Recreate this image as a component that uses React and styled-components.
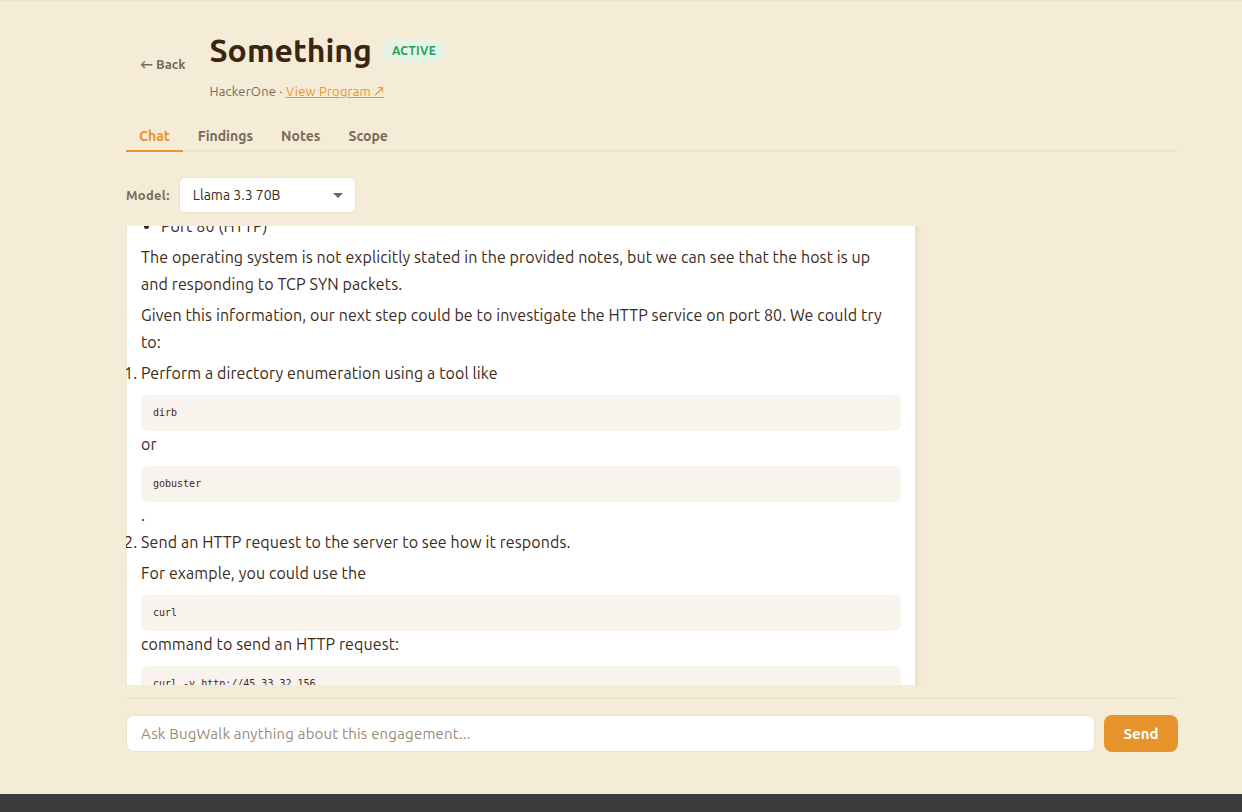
import React, { useLayoutEffect, useRef } from "react";
import styled, { createGlobalStyle } from "styled-components";

const GlobalStyle = createGlobalStyle`
  html, body {
    margin: 0;
    padding: 0;
    background: #f5ecd8;
    font-family: "Ubuntu", "Lato", "Noto Sans", sans-serif;
    color: #3d2a1a;
  }
  * { box-sizing: border-box; }
`;

const Page = styled.div`
  height: 812px;
  display: flex;
  flex-direction: column;
  border-top: 1px solid #efe3c9;
`;

const Main = styled.main`
  flex: 1;
  display: flex;
  flex-direction: column;
  padding: 29px 64px 0 126px;
  min-height: 0;
`;

const Footer = styled.div`
  height: 18px;
  background: #3a3b3d;
`;

const Header = styled.header`
  display: flex;
  align-items: center;
  gap: 10px;
`;

const BackButton = styled.button`
  background: transparent;
  border: none;
  padding: 8px 14px 10px;
  font-family: inherit;
  font-size: 13px;
  font-weight: 700;
  color: #7a6a58;
  cursor: pointer;
`;

const TitleBlock = styled.div`
  display: flex;
  flex-direction: column;
`;

const TitleRow = styled.div`
  display: flex;
  align-items: center;
  gap: 10px;
`;

const Title = styled.h1`
  margin: 0;
  font-size: 32px;
  line-height: 40px;
  font-weight: 700;
  color: #3b2410;
`;

const Badge = styled.span`
  background: #e6f4e8;
  color: #27a05a;
  font-size: 12px;
  font-weight: 700;
  letter-spacing: 0.3px;
  padding: 5px 10px;
  border-radius: 12px;
`;

const Subtitle = styled.div`
  margin-top: 13px;
  font-size: 13px;
  color: #7a6a58;
  letter-spacing: 0.2px;
`;

const ProgramLink = styled.a`
  color: #e8942c;
  text-decoration: underline;
`;

const Tabs = styled.nav`
  display: flex;
  gap: 2px;
  margin-top: 22px;
  border-bottom: 2px solid #ede2cd;
`;

const Tab = styled.button`
  background: transparent;
  border: none;
  font-family: inherit;
  font-size: 14px;
  font-weight: 700;
  padding: 7px 13px 6px;
  margin-bottom: -2px;
  color: ${({ $active }) => ($active ? "#e8942c" : "#7a6a58")};
  border-bottom: 2px solid ${({ $active }) => ($active ? "#e8942c" : "transparent")};
  cursor: pointer;
`;

const ModelRow = styled.div`
  display: flex;
  align-items: center;
  gap: 9px;
  margin-top: 25px;
`;

const ModelLabel = styled.label`
  font-size: 13px;
  font-weight: 700;
  color: #7a6a58;
  letter-spacing: 0.3px;
`;

const Select = styled.div`
  width: 177px;
  height: 36px;
  background: #fff;
  border: 1px solid #ede2cd;
  border-radius: 6px;
  display: flex;
  align-items: center;
  justify-content: space-between;
  padding: 0 12px 0 13px;
  font-size: 14px;
  color: #3d2a1a;
`;

const Caret = styled.span`
  width: 0;
  height: 0;
  border-left: 5px solid transparent;
  border-right: 5px solid transparent;
  border-top: 5px solid #6f6458;
`;

const ChatScroll = styled.div`
  margin-top: 13px;
  height: 459px;
  overflow: hidden;
`;

const Bubble = styled.div`
  width: 789px;
  background: #fff;
  border-left: 1px solid #efe6d6;
  padding: 10px 14px 20px 14px;
  box-shadow: 3px 0 4px rgba(160, 130, 80, 0.12);
  font-size: 16px;
  line-height: 27px;
  letter-spacing: 0.1px;
  color: #3d2a1a;
  margin-bottom: 12px;
`;

const UserBubble = styled(Bubble)`
  margin-left: auto;
  width: 520px;
  background: #e8942c;
  color: #fff;
  box-shadow: none;
  border: none;
  border-radius: 10px;
`;

const P = styled.p`
  margin: 4px 0;
  padding-right: 10px;
`;

const BulletList = styled.ul`
  margin: 4px 0;
  padding-left: 20px;
`;

const NumberList = styled.ol`
  margin: 3px 0 0;
  padding-left: 0;
`;

const Item = styled.li``;

const Code = styled.pre`
  margin: 8px 0 0;
  background: #f8f3ec;
  border-radius: 6px;
  padding: 12px;
  font-family: "DejaVu Sans Mono", "Liberation Mono", monospace;
  font-size: 10px;
  line-height: 12px;
  letter-spacing: 0;
  color: #3d2a1a;
  white-space: pre-wrap;
`;

const Composer = styled.form`
  margin-top: 12px;
  border-top: 2px solid #ede2cd;
  padding-top: 16px;
  display: flex;
  gap: 9px;
`;

const Input = styled.input`
  flex: 1;
  height: 37px;
  border: 1px solid #ece2d0;
  border-radius: 8px;
  background: #fff;
  padding: 0 14px;
  font-family: inherit;
  font-size: 15px;
  letter-spacing: 0.2px;
  color: #3d2a1a;
  outline: none;
  &::placeholder {
    color: #9a8a78;
  }
`;

const SendButton = styled.button`
  width: 74px;
  height: 37px;
  border: none;
  border-radius: 8px;
  background: #e8942c;
  color: #fff;
  font-family: inherit;
  font-size: 15px;
  font-weight: 700;
  cursor: pointer;
`;

const tabs = ["Chat", "Findings", "Notes", "Scope"];

export default function App() {
  const scrollRef = useRef(null);
  const anchorRef = useRef(null);

  useLayoutEffect(() => {
    const box = scrollRef.current;
    const anchor = anchorRef.current;
    if (box && anchor) {
      const offset =
        anchor.getBoundingClientRect().top - box.getBoundingClientRect().top;
      box.scrollTop = offset + 13;
    }
  }, []);

  return (
    <>
      <GlobalStyle />
      <Page>
        <Main>
          <Header>
            <BackButton>← Back</BackButton>
            <TitleBlock>
              <TitleRow>
                <Title>Something</Title>
                <Badge>ACTIVE</Badge>
              </TitleRow>
              <Subtitle>
                HackerOne · <ProgramLink href="#">View Program ↗</ProgramLink>
              </Subtitle>
            </TitleBlock>
          </Header>

          <Tabs>
            {tabs.map((t, i) => (
              <Tab key={t} $active={i === 0}>
                {t}
              </Tab>
            ))}
          </Tabs>

          <ModelRow>
            <ModelLabel>Model:</ModelLabel>
            <Select>
              Llama 3.3 70B
              <Caret />
            </Select>
          </ModelRow>

          <ChatScroll ref={scrollRef}>
            <UserBubble>
              What can you tell me about the host from my recon notes so far?
            </UserBubble>
            <Bubble>
              <P>
                Based on the notes you provided, the target host 45.33.32.156
                has the following open ports:
              </P>
              <BulletList>
                <Item>Port 22 (SSH)</Item>
                <Item ref={anchorRef}>Port 80 (HTTP)</Item>
              </BulletList>
              <P>
                The operating system is not explicitly stated in the provided
                notes, but we can see that the host is up and responding to TCP
                SYN packets.
              </P>
              <P>
                Given this information, our next step could be to investigate
                the HTTP service on port 80. We could try to:
              </P>
              <NumberList>
                <Item>
                  Perform a directory enumeration using a tool like
                  <Code>dirb</Code>
                  or
                  <Code>gobuster</Code>.
                </Item>
                <Item>
                  Send an HTTP request to the server to see how it responds.
                  <P>For example, you could use the</P>
                  <Code>curl</Code>
                  command to send an HTTP request:
                  <Code>curl -v http://45.33.32.156</Code>
                  This will show the response headers and body.
                </Item>
              </NumberList>
            </Bubble>
          </ChatScroll>

          <Composer onSubmit={(e) => e.preventDefault()}>
            <Input placeholder="Ask BugWalk anything about this engagement..." />
            <SendButton type="submit">Send</SendButton>
          </Composer>
        </Main>
        <Footer />
      </Page>
    </>
  );
}
